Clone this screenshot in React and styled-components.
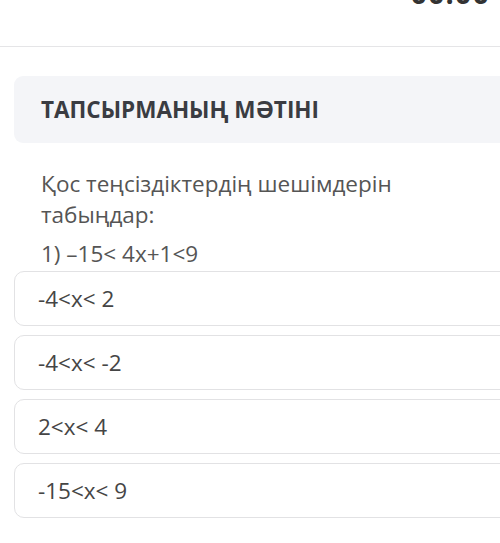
import React from 'react';
import styled, { createGlobalStyle } from 'styled-components';

const GlobalStyle = createGlobalStyle`
  html, body {
    margin: 0;
    padding: 0;
    background: #ffffff;
    overflow: hidden;
  }
  body {
    font-family: "Open Sans", "Noto Sans", sans-serif;
  }
`;

const Page = styled.div`
  width: 530px;
  height: 543px;
  background: #fff;
`;

const Header = styled.div`
  height: 46px;
  border-bottom: 1px solid #e5e5e7;
  display: flex;
  justify-content: flex-end;
  align-items: flex-start;
  padding-right: 40px;
  overflow: hidden;
`;

const Timer = styled.div`
  font-size: 29px;
  font-weight: 700;
  color: #333;
  margin-top: -27px;
  line-height: 40px;
  letter-spacing: 1px;
`;

const Main = styled.div`
  padding: 29px 0 0 14px;
  display: flex;
  flex-direction: column;
`;

const TitleBox = styled.div`
  background: #f4f5f8;
  border-radius: 9px;
  height: 67px;
  display: flex;
  align-items: center;
  padding-left: 27px;
`;

const Title = styled.h2`
  margin: 0;
  font-size: 22.5px;
  font-weight: 700;
  color: #3a3c42;
`;

const Question = styled.div`
  padding: 25px 0 0 27px;
  color: #555;
  font-size: 22.5px;
`;

const Para = styled.p`
  margin: 0 0 ${(p) => p.$gap || 0}px;
  line-height: 31px;
  width: 420px;
`;

const Options = styled.div`
  display: flex;
  flex-direction: column;
  gap: 9px;
  margin-top: 2px;
`;

const Option = styled.div`
  height: 53px;
  border: 1px solid #e2e2e4;
  border-radius: 10px;
  display: flex;
  align-items: center;
  padding-left: 23px;
  font-size: 22.5px;
  color: #454545;
  background: #fff;
`;

const answers = ['-4<x< 2', '-4<x< -2', '2<x< 4', '-15<x< 9'];

export default function App() {
  return (
    <Page>
      <GlobalStyle />
      <Header>
        <Timer>00:00</Timer>
      </Header>
      <Main>
        <TitleBox>
          <Title>ТАПСЫРМАНЫҢ МӘТІНІ</Title>
        </TitleBox>
        <Question>
          <Para $gap={8}>Қос теңсіздіктердің шешімдерін табыңдар:</Para>
          <Para>1) –15&lt; 4x+1&lt;9</Para>
        </Question>
        <Options>
          {answers.map((a) => (
            <Option key={a}>{a}</Option>
          ))}
        </Options>
      </Main>
    </Page>
  );
}
